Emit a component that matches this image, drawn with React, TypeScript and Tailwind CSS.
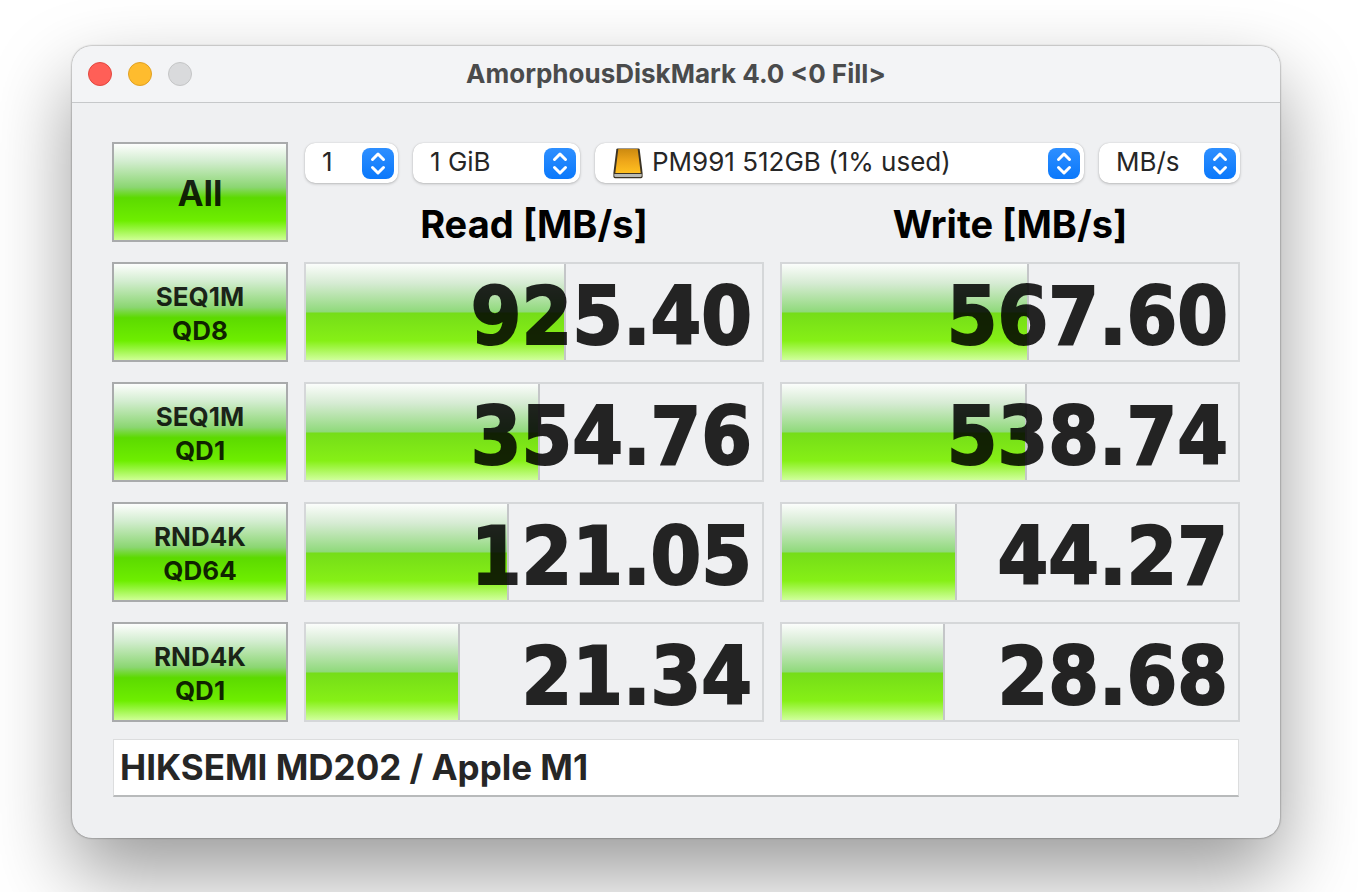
const tests = [
  { id: "seq1m-qd8", name: "SEQ1M", depth: "QD8", read: "925.40", readFill: 57.1, write: "567.60", writeFill: 54.1 },
  { id: "seq1m-qd1", name: "SEQ1M", depth: "QD1", read: "354.76", readFill: 51.3, write: "538.74", writeFill: 53.8 },
  { id: "rnd4k-qd64", name: "RND4K", depth: "QD64", read: "121.05", readFill: 44.5, write: "44.27", writeFill: 38.4 },
  { id: "rnd4k-qd1", name: "RND4K", depth: "QD1", read: "21.34", readFill: 33.8, write: "28.68", writeFill: 35.7 },
];

const buttonClass =
  "h-[100px] border-2 border-[#a9abac] bg-[linear-gradient(to_bottom,#fdfefd_0%,#d3edd0_18%,#8bd672_45%,#5cda00_56%,#6eee00_80%,#cfff95_100%)] pt-[3px] font-bold text-black/85";

function DriveIcon() {
  return (
    <svg className="pointer-events-none absolute left-[17px] top-1 h-8 w-8" viewBox="0 -1 32 32" aria-hidden="true">
      <defs>
        <linearGradient id="drive-top" x1="0" y1="0" x2="0" y2="1">
          <stop offset="0" stopColor="#cc8a10" />
          <stop offset="0.5" stopColor="#eea61a" />
          <stop offset="1" stopColor="#ffc020" />
        </linearGradient>
      </defs>
      <path d="M5.5 0.5h21q1 0 1.2 1L30.6 25v3.5q0 1.8-1.6 1.8H3q-1.6 0-1.6-1.8V25L4.3 1.5q.2-1 1.2-1z" fill="#3b3324" />
      <path d="M6.3 1h19.400L28.7 25H3.3z" fill="url(#drive-top)" />
      <path d="M2.3 26h27.4v1.8q0 1.2-1.2 1.2h-25q-1.200 0-1.200-1.200z" fill="#b9bab4" />
    </svg>
  );
}

function PopUp({ label, value, width, icon }: { label: string; value: string; width: string; icon?: boolean }) {
  return (
    <div className={`relative h-10 ${width}`}>
      <select
        aria-label={label}
        defaultValue={value}
        className={`h-full w-full appearance-none rounded-[10px] bg-white pr-10 pb-[2px] text-[26px] leading-8 text-[#262626] shadow-[0_0_1px_rgba(0,0,0,0.2),0_1px_3px_rgba(0,0,0,0.22)] ${icon ? "pl-[57px]" : "pl-[17px]"}`}
      >
        <option>{value}</option>
      </select>
      {icon && <DriveIcon />}
      <svg className="pointer-events-none absolute right-1 top-1 h-8 w-8" viewBox="0 0 32 32" aria-hidden="true">
        <defs>
          <linearGradient id="stepper" x1="0" y1="0" x2="0" y2="1">
            <stop offset="0" stopColor="#2e8fff" />
            <stop offset="1" stopColor="#0a78fb" />
          </linearGradient>
        </defs>
        <rect y="1" width="32" height="31" rx="8" fill="url(#stepper)" />
        <path d="M10.500 12.500l5.500-5.500 5.500 5.500M10.500 20.500l5.500 5.500 5.500-5.500" fill="none" stroke="white" strokeWidth="3" strokeLinecap="round" strokeLinejoin="round" />
      </svg>
    </div>
  );
}

function Meter({ label, value, fill }: { label: string; value: string; fill: number }) {
  return (
    <div
      role="meter"
      aria-label={label}
      aria-valuemin={0}
      aria-valuemax={100}
      aria-valuenow={fill}
      aria-valuetext={value}
      className="relative flex h-[100px] items-center justify-end border-2 border-[#d5d7d9] pt-2 pr-[10px]"
    >
      <div
        className="absolute inset-y-0 left-0 border-r-2 border-[#c4c6c8] bg-[linear-gradient(to_bottom,#fbfdfb_0%,#d6ebd3_20%,#8fd97a_50%,#75dd18_51%,#86f016_80%,#d0ff9c_100%)]"
        style={{ width: `${fill}%` }}
      />
      <span className="relative font-['DejaVu_Sans_Condensed','DejaVu_Sans',sans-serif] text-[81px] leading-[88px] font-bold text-black opacity-85 [-webkit-text-stroke:2px_black]">
        {value}
      </span>
    </div>
  );
}

export default function App() {
  return (
    <div className="min-h-screen overflow-hidden bg-white pt-[46px] pr-[78px] pb-[54px] pl-[72px] font-['Inter','Liberation_Sans',sans-serif]">
      <main className="overflow-hidden rounded-[20px] bg-[#eff0f2] shadow-[0_0_2px_rgba(0,0,0,0.6),0_36px_80px_rgba(0,0,0,0.4)]">
        <header className="grid h-[57px] grid-cols-[1fr_auto_1fr] items-center border-b border-[#c6c8ca] bg-[#f3f4f6] px-4">
          <div className="flex gap-4">
            <button aria-label="Close" className="h-6 w-6 rounded-full border border-[#e2473f] bg-[#ff5f57]" />
            <button aria-label="Minimize" className="h-6 w-6 rounded-full border border-[#e0a023] bg-[#febc2e]" />
            <button aria-label="Zoom" disabled className="h-6 w-6 rounded-full border border-[#c4c5c6] bg-[#d9dadc]" />
          </div>
          <h1 className="text-[26px] leading-8 font-bold text-[#4a4b4c]">AmorphousDiskMark 4.0 &lt;0 Fill&gt;</h1>
        </header>

        <div className="px-10 pt-[39px] pb-[41px]">
          <div className="grid grid-cols-[176px_1fr_1fr] gap-x-4 gap-y-5">
            <button className={`${buttonClass} text-[35px]`}>All</button>
            <div className="col-span-2 flex flex-col">
              <div className="flex gap-[15px] pt-px pl-px">
                <PopUp label="Test count" value="1" width="w-[93px]" />
                <PopUp label="Test size" value="1 GiB" width="w-[167px]" />
                <PopUp label="Target disk" value="PM991 512GB (1% used)" width="flex-1" icon />
                <PopUp label="Unit" value="MB/s" width="w-[141px]" />
              </div>
              <div className="grid grid-cols-2 gap-4 pt-[23px] text-center text-[38px] leading-9 font-bold text-black">
                <h2>Read [MB/s]</h2>
                <h2>Write [MB/s]</h2>
              </div>
            </div>

            {tests.map((test) => (
              <div key={test.id} className="contents">
                <button className={`${buttonClass} text-[26px] leading-[34px]`}>
                  {test.name}
                  <br />
                  {test.depth}
                </button>
                <Meter label={`${test.name} ${test.depth} read`} value={test.read} fill={test.readFill} />
                <Meter label={`${test.name} ${test.depth} write`} value={test.write} fill={test.writeFill} />
              </div>
            ))}
          </div>

          <div className="px-px pt-[17px]">
            <input
              aria-label="Comment"
              defaultValue="HIKSEMI MD202 / Apple M1"
              className="block h-[58px] w-full border border-b-2 border-[#dcddde] border-b-[#b8babb] bg-white px-[6px] pb-[2px] text-[35px] font-bold text-[#262626]"
            />
          </div>
        </div>
      </main>
    </div>
  );
}
